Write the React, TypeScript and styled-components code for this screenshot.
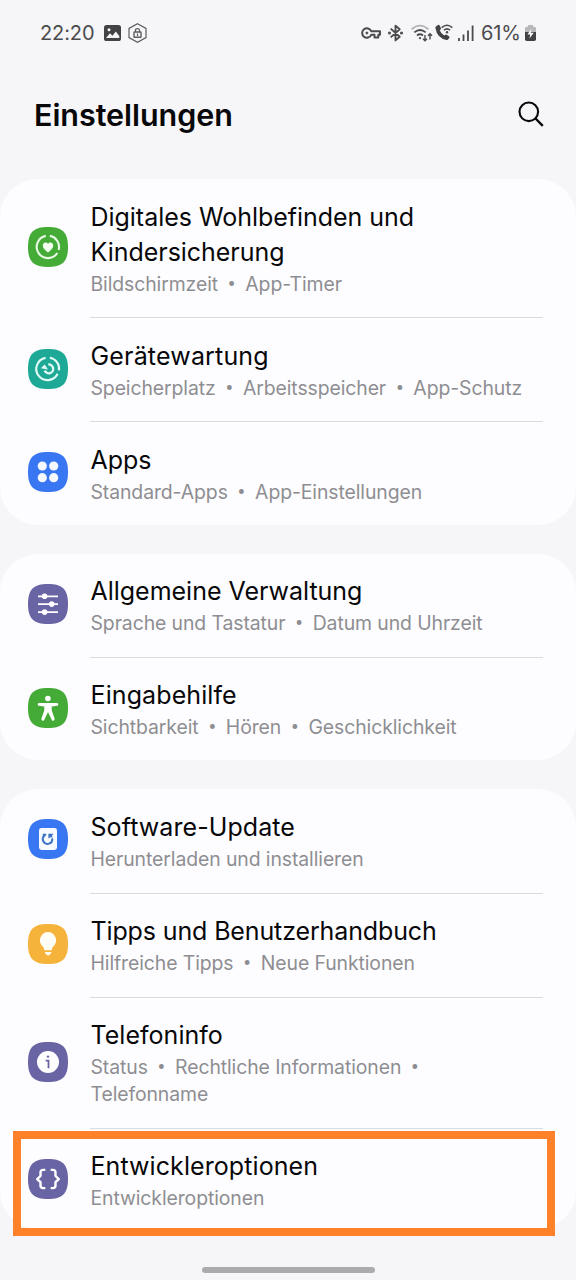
import React from 'react';
import styled, { createGlobalStyle } from 'styled-components';

const GlobalStyle = createGlobalStyle`
  * { box-sizing: border-box; }
  body {
    margin: 0;
    background: #f6f6f8;
    color: #08080a;
    font-family: Inter, Roboto, "Liberation Sans", sans-serif;
  }
`;

const Screen = styled.div`
  display: flex;
  flex-direction: column;
  height: 1280px;
  overflow: hidden;
  background: #f6f6f8;
`;

const StatusBar = styled.div`
  display: flex;
  justify-content: space-between;
  align-items: center;
  height: 65px;
  padding: 0 40px;
  color: #4b4b4e;
  font-size: 20px;
  line-height: 24px;
`;

const StatusGroup = styled.div`
  display: flex;
  align-items: center;
`;

const StatusIcon = styled.svg<{ $gap?: number }>`
  display: block;
  flex: none;
  margin-left: ${p => p.$gap ?? 0}px;
  overflow: visible;
`;

const Percent = styled.span`
  margin-left: 7px;
  width: 43px;
  letter-spacing: -0.1px;
`;

const Clock = styled.span`
  width: 64px;
  letter-spacing: -0.1px;
`;

const Header = styled.header`
  display: flex;
  justify-content: space-between;
  align-items: center;
  height: 100px;
  margin-bottom: 14px;
  padding: 0 32px 0 34px;
`;

const Heading = styled.h1`
  margin: 0;
  font-size: 30.5px;
  line-height: 40px;
  font-weight: 600;
  letter-spacing: -0.05px;
`;

const SearchIcon = styled.svg`
  display: block;
  margin-top: -3px;
`;

const Card = styled.section`
  display: flex;
  flex-direction: column;
  margin-bottom: 29px;
  border-radius: 38px;
  background: #fdfdff;
`;

const RowText = styled.div<{ $top?: number; $bottom?: number }>`
  flex: 1;
  padding: ${p => p.$top ?? 20}px 0 ${p => p.$bottom ?? 20}px;
  border-bottom: 1px solid #dcdcdf;
`;

const Row = styled.div`
  position: relative;
  display: flex;
  align-items: center;
  padding: 0 33px 0 28px;

  &:last-child > ${RowText} { border-bottom: 0; }
`;

const AppIcon = styled.svg<{ $lift: number }>`
  display: block;
  flex: none;
  width: 40px;
  height: 40px;
  margin: 0 22px ${p => p.$lift}px 0;
`;

const Title = styled.div<{ $spacing?: number }>`
  padding-left: 0.5px;
  font-size: 25px;
  line-height: 35px;
  letter-spacing: ${p => p.$spacing ?? 0}px;
  white-space: pre-line;
`;

const Summary = styled.div`
  margin-top: 1px;
  padding-left: 0.5px;
  color: #8e8e92;
  font-size: 19.4px;
  line-height: 27px;
  letter-spacing: -0.09px;
`;

const SummaryLine = styled.div`
  display: flex;
  white-space: nowrap;
`;

const Dot = styled.span`
  width: 27.3px;
  text-align: center;
  font-family: Roboto, sans-serif;
  font-size: 23px;
`;

const Highlight = styled.div`
  position: absolute;
  top: 2px;
  left: 13px;
  width: 542px;
  height: 105px;
  border: 8px solid #ff8129;
`;

const HomeIndicator = styled.div`
  width: 173px;
  height: 6px;
  margin: 9px auto 0;
  border-radius: 3px;
  background: #ababad;
`;

type IconName = 'wellbeing' | 'care' | 'apps' | 'general' | 'access' | 'update' | 'tips' | 'info' | 'dev';

const iconColors: Record<IconName, string> = {
  wellbeing: '#45ab37',
  care: '#1ea996',
  apps: '#3976f2',
  general: '#6965a4',
  access: '#45ab37',
  update: '#3976f2',
  tips: '#f6b33b',
  info: '#6965a4',
  dev: '#6965a4',
};

const glyphs: Record<IconName, React.ReactNode> = {
  wellbeing: (
    <>
      <g fill="none" stroke="#e9fbe6" strokeWidth="2.1">
        <path d="M17.8 8.9A11.2 11.2 0 1 0 29.3 26" />
        <path d="M21.8 8.9A11.2 11.2 0 0 1 30.6 23" />
      </g>
      <path d="M20 25.4C16.9 23.1 14.8 21.2 14.8 18.5C14.8 15.5 18.4 14.6 20 16.9C21.6 14.6 25.2 15.5 25.2 18.5C25.2 21.2 23.1 23.1 20 25.4Z" fill="#f2fff0" />
    </>
  ),
  care: (
    <>
      <g fill="none" stroke="#e3fbf6" strokeWidth="2.1">
        <path d="M17.6 8.9A11.2 11.2 0 1 0 29.6 24.8" />
        <path d="M21.8 8.8A11.2 11.2 0 0 1 31 21.4" />
        <path d="M20.3 15.5A4.4 4.4 0 1 1 16.7 21.5" strokeWidth="2.3" />
      </g>
      <path d="M12.8 19.2L16.6 15.4L20 20.4Z" fill="#e3fbf6" />
    </>
  ),
  apps: (
    <g fill="#f5f9ff">
      <circle cx="14.3" cy="14" r="4.6" />
      <circle cx="25.7" cy="14" r="4.6" />
      <circle cx="14.3" cy="25.7" r="4.6" />
      <circle cx="25.7" cy="25.7" r="4.6" />
    </g>
  ),
  general: (
    <g stroke="#fff" strokeWidth="1.8" fill="#fff">
      <path d="M10 12.3H30M10 20.1H30M10 28.1H30" />
      <circle cx="16.6" cy="12.3" r="1.9" />
      <circle cx="23.7" cy="20.1" r="1.9" />
      <circle cx="16.6" cy="28.1" r="1.9" />
    </g>
  ),
  access: (
    <g fill="#fff">
      <circle cx="19.9" cy="10.5" r="2.8" />
      <path d="M11 15H29Q30.3 15 30.3 16.4Q30.3 17.6 29 17.7L23.7 18.4V22.2L26.6 30.8Q26.8 32.3 25.5 32.7Q24.2 33 23.7 31.8L20 24L16.3 31.8Q15.8 33 14.5 32.7Q13.2 32.3 13.4 30.8L16.3 22.2V18.4L11 17.7Q9.7 17.6 9.7 16.4Q9.7 15 11 15Z" />
    </g>
  ),
  update: (
    <>
      <rect x="11" y="9" width="18" height="22" rx="2.4" fill="#f7faff" />
      <path d="M14.8 15.8H18.2M16.7 16.5A4.7 4.7 0 1 0 24.2 19.4" fill="none" stroke="#3c72c4" strokeWidth="2" />
      <path d="M20.4 19.6V14.8H25.6L23.8 16.7L24.8 18.6L22.4 18.2Z" fill="#3c72c4" />
    </>
  ),
  tips: (
    <g fill="#fffdf5">
      <path d="M20 8.1A8.1 8.1 0 0 0 11.9 16.2C11.9 19.4 13.6 21.4 15.2 23.1Q16.2 24.4 16.2 26.2H23.8Q23.8 24.4 24.8 23.1C26.4 21.4 28.1 19.4 28.1 16.2A8.1 8.1 0 0 0 20 8.1Z" />
      <path d="M16.6 28H23.6Q22.8 30.8 20.1 31.8Q17.4 30.8 16.6 28Z" />
    </g>
  ),
  info: (
    <>
      <circle cx="20" cy="20" r="11" fill="#fff" />
      <circle cx="20" cy="14.6" r="1.2" fill="#6965a4" />
      <path d="M17.6 18.7H20.5V26.2" fill="none" stroke="#6965a4" strokeWidth="1.8" />
    </>
  ),
  dev: (
    <g fill="none" stroke="#fff" strokeWidth="2.4" strokeLinejoin="round">
      <path d="M17.3 10.9H15.1Q12.5 10.9 12.5 13.5V17L9.2 20.1L12.5 23.2V26.5Q12.5 29.1 15.1 29.1H17.3" />
      <path d="M22.7 10.9H24.9Q27.5 10.9 27.5 13.5V17L30.8 20.1L27.5 23.2V26.5Q27.5 29.1 24.9 29.1H22.7" />
    </g>
  ),
};

interface Item {
  icon: IconName;
  title: string;
  spacing?: number;
  lift?: number;
  top?: number;
  bottom?: number;
  summary: string[][];
  highlighted?: boolean;
}

const groups: Item[][] = [
  [
    { icon: 'wellbeing', title: 'Digitales Wohlbefinden und\nKindersicherung', spacing: -0.03, top: 21, bottom: 19, summary: [['Bildschirmzeit', 'App-Timer']] },
    { icon: 'care', title: 'Gerätewartung', spacing: 0.17, top: 20.5, bottom: 19.5, summary: [['Speicherplatz', 'Arbeitsspeicher', 'App-Schutz']] },
    { icon: 'apps', title: 'Apps', top: 20.5, bottom: 19.5, summary: [['Standard-Apps', 'App-Einstellungen']] },
  ],
  [
    { icon: 'general', title: 'Allgemeine Verwaltung', spacing: -0.02, lift: 4, summary: [['Sprache und Tastatur', 'Datum und Uhrzeit']] },
    { icon: 'access', title: 'Eingabehilfe', spacing: 0.1, bottom: 19, lift: 2, summary: [['Sichtbarkeit', 'Hören', 'Geschicklichkeit']] },
  ],
  [
    { icon: 'update', title: 'Software-Update', spacing: 0.08, top: 21, lift: 5, summary: [['Herunterladen und installieren']] },
    { icon: 'tips', title: 'Tipps und Benutzerhandbuch', spacing: -0.13, lift: 4, summary: [['Hilfreiche Tipps', 'Neue Funktionen']] },
    { icon: 'info', title: 'Telefoninfo', spacing: 0.03, summary: [['Status', 'Rechtliche Informationen', ''], ['Telefonname']] },
    { icon: 'dev', title: 'Entwickleroptionen', spacing: 0.08, bottom: 17, lift: 0, summary: [['Entwickleroptionen']], highlighted: true },
  ],
];

const SettingsRow = ({ item }: { item: Item }) => (
  <Row>
    <AppIcon viewBox="0 0 40 40" $lift={item.lift ?? 3}>
      <path d="M20 0C34.5 0 40 5.5 40 20S34.5 40 20 40S0 34.5 0 20S5.5 0 20 0Z" fill={iconColors[item.icon]} />
      {glyphs[item.icon]}
    </AppIcon>
    <RowText $top={item.top} $bottom={item.bottom}>
      <Title $spacing={item.spacing}>{item.title}</Title>
      <Summary>
        {item.summary.map((line, i) => (
          <SummaryLine key={i}>
            {line.map((part, j) => (
              <React.Fragment key={j}>
                {j > 0 && <Dot>•</Dot>}
                {part && <span>{part}</span>}
              </React.Fragment>
            ))}
          </SummaryLine>
        ))}
      </Summary>
    </RowText>
    {item.highlighted && <Highlight />}
  </Row>
);

const TopStatus = () => (
  <StatusBar>
    <StatusGroup>
      <Clock>22:20</Clock>
      <StatusIcon width="17" height="16" viewBox="0 0 17 16">
        <rect width="17" height="16" rx="2.6" fill="#424245" />
        <circle cx="5" cy="4.8" r="1.5" fill="#f6f6f8" />
        <path d="M2 13L6 8.3L8.5 10.8L11.8 6.5L15.3 11V13Z" fill="#f6f6f8" />
      </StatusIcon>
      <StatusIcon $gap={7} width="19" height="20" viewBox="0 0 19 20" fill="none" stroke="#5c5c60" strokeWidth="1.2">
        <path d="M9.5 .8L18 5.4V14.6L9.5 19.2L1 14.6V5.4Z" />
        <rect x="6" y="9" width="7" height="5.2" rx=".5" strokeWidth="1.4" />
        <path d="M7.5 9V7.3Q7.5 5.6 9.5 5.6T11.5 7.3V9M9.5 10.5V13" />
      </StatusIcon>
    </StatusGroup>
    <StatusGroup>
      <StatusIcon width="20" height="12" viewBox="0 0 20 12" fill="none" stroke="#4b4b4e" strokeWidth="2">
        <path d="M10.2 4.2A4.7 4.7 0 1 0 10.2 7.8H13.5V10.6H17.3V7.8H19V4.2Z" strokeLinejoin="round" />
        <circle cx="5.9" cy="6" r="1" fill="#4b4b4e" strokeWidth="1" />
      </StatusIcon>
      <StatusIcon $gap={7} width="15" height="18" viewBox="0 0 15 18" fill="none" stroke="#4b4b4e" strokeWidth="1.9">
        <path d="M2.7 4.6L11.7 12.8L7.5 16.4V1.6L11.7 5.2L2.7 13.4" strokeLinejoin="round" />
        <circle cx="1.5" cy="9" r=".6" fill="#4b4b4e" />
        <circle cx="13.5" cy="9" r=".6" fill="#4b4b4e" />
      </StatusIcon>
      <StatusIcon $gap={8} width="22" height="18" viewBox="0 0 22 18" fill="none" stroke="#4b4b4e" strokeWidth="1.8">
        <path d="M.6 5.3Q9 -2 17.4 5.3" stroke="#b4b4b8" />
        <path d="M3.3 8.4Q9 3.7 14.7 8.4M6 11.5Q9 9 12 11.5" />
        <circle cx="9" cy="14.2" r="1.1" fill="#4b4b4e" stroke="none" />
        <path d="M14 11V16.5M12 14.7L14 16.8L16 14.7M19 15.5V10M17 11.8L19 9.7L21 11.8" strokeWidth="1.4" />
      </StatusIcon>
      <StatusIcon $gap={2} width="18" height="17" viewBox="0 0 18 17">
        <path d="M1.2 2.2L3.3 .8Q4 .5 4.5 1.3L6 4.2Q6.2 4.9 5.6 5.4L4.7 6.3Q6 9.7 9.3 11.6L10.5 10.7Q11.1 10.3 11.7 10.7L14.2 12.5Q14.8 13 14.4 13.7L13 15.4Q12.5 16 11.5 15.9Q2.2 14.5 .4 4.1Q.3 2.9 1.2 2.2Z" fill="#424245" />
        <path d="M6.7 3.6Q12 -1.2 17.3 3.6M8.9 6.2Q12 3.5 15.1 6.2" fill="none" stroke="#4b4b4e" strokeWidth="1.5" />
        <circle cx="12" cy="8.2" r="1.2" fill="#4b4b4e" />
      </StatusIcon>
      <StatusIcon $gap={5} width="16" height="16" viewBox="0 0 16 16" stroke="#4b4b4e" strokeWidth="1.8">
        <path d="M1 13V16M5.5 9.5V16M10 5.5V16M14.6 .5V16" />
      </StatusIcon>
      <Percent>61%</Percent>
      <StatusIcon $gap={1} width="11" height="16" viewBox="0 0 11 16">
        <path d="M3 1.7V.6Q3 0 3.6 0H7.4Q8 0 8 .6V1.7H9.3Q11 1.7 11 3.4V7H0V3.4Q0 1.7 1.7 1.7Z" fill="#b7b7ba" />
        <path d="M0 7H11V14.3Q11 16 9.3 16H1.7Q0 16 0 14.3Z" fill="#424245" />
        <path d="M6.5 3.8L2.3 9.5H5.2L4.5 13.5L8.8 7.8H5.9Z" fill="#f6f6f8" />
      </StatusIcon>
    </StatusGroup>
  </StatusBar>
);

export default function App() {
  return (
    <Screen>
      <GlobalStyle />
      <TopStatus />
      <Header>
        <Heading>Einstellungen</Heading>
        <SearchIcon width="26" height="26" viewBox="0 0 26 26" fill="none" stroke="#08080a" strokeWidth="2.1">
          <circle cx="10.8" cy="10.8" r="9.3" />
          <path d="M17.5 17.5L24.8 24.8" strokeWidth="2.4" />
        </SearchIcon>
      </Header>
      {groups.map((group, i) => (
        <Card key={i}>
          {group.map(item => <SettingsRow key={item.title} item={item} />)}
        </Card>
      ))}
      <HomeIndicator />
    </Screen>
  );
}
